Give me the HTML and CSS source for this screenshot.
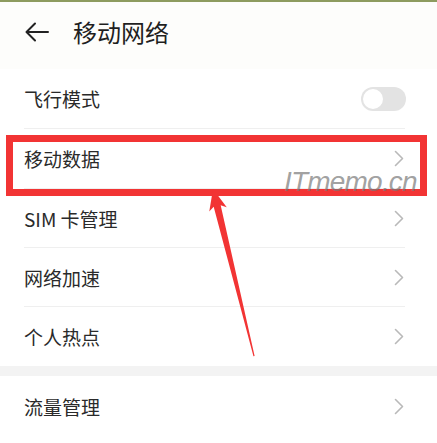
FILE: index.html
```html
<!DOCTYPE html>
<html>
<head>
    <meta charset="UTF-8">
    <title>移动网络</title>
    <link rel="stylesheet" href="styles.css">
</head>
<body>
    <div class="screen">
        <!-- Title bar -->
        <div class="topbar">
            <svg class="back" width="24" height="20" viewBox="0 0 24 20">
                <path d="M23 10 H2 M10 1.5 L1.5 10 L10 18.5" fill="none" stroke="#222" stroke-width="2" stroke-linecap="round" stroke-linejoin="round"/>
            </svg>
            <span class="title">移动网络</span>
        </div>

        <div class="group">
            <div class="row">
                <span class="label">飞行模式</span>
                <span class="switch"><span class="knob"></span></span>
            </div>
            <div class="row">
                <span class="label">移动数据</span>
                <svg class="chev" width="10" height="17" viewBox="0 0 10 17"><path d="M1.5 1.5 L8.5 8.5 L1.5 15.5" /></svg>
            </div>
            <div class="row short">
                <span class="label">SIM 卡管理</span>
                <svg class="chev" width="10" height="17" viewBox="0 0 10 17"><path d="M1.5 1.5 L8.5 8.5 L1.5 15.5" /></svg>
            </div>
            <div class="row short">
                <span class="label">网络加速</span>
                <svg class="chev" width="10" height="17" viewBox="0 0 10 17"><path d="M1.5 1.5 L8.5 8.5 L1.5 15.5" /></svg>
            </div>
            <div class="row short last">
                <span class="label">个人热点</span>
                <svg class="chev" width="10" height="17" viewBox="0 0 10 17"><path d="M1.5 1.5 L8.5 8.5 L1.5 15.5" /></svg>
            </div>
        </div>

        <div class="spacer"></div>

        <div class="group">
            <div class="row last">
                <span class="label">流量管理</span>
                <svg class="chev" width="10" height="17" viewBox="0 0 10 17"><path d="M1.5 1.5 L8.5 8.5 L1.5 15.5" /></svg>
            </div>
        </div>

        <!-- Annotation layer -->
        <div class="mark-box"></div>
        <div class="watermark">ITmemo.cn</div>
        <svg class="pointer" width="437" height="443" viewBox="0 0 437 443">
            <g transform="translate(213 189) rotate(-13.8)">
                <polygon points="0,0 -9,21 -3.6,17.5 -0.6,172 0.6,172 3.6,17.5 9,21" fill="#f23434"/>
            </g>
        </svg>
    </div>
</body>
</html>
```

FILE: styles.css
```css
/* Settings screen */
* {
    box-sizing: border-box;
}

body {
    margin: 0;
    background: #ffffff;
    font-family: "Noto Sans CJK SC", "Noto Sans", sans-serif;
    color: #2a2a2a;
}

.screen {
    position: relative;
    width: 437px;
    height: 443px;
    overflow: hidden;
    background: #ffffff;
    border-top: 2px solid #8d9b5f;
}

.topbar {
    height: 67px;
    display: flex;
    align-items: center;
    padding: 0 0 8px 25px;
    background: #fdfdfb;
}

.back {
    display: block;
    margin-right: 24px;
}

.title {
    font-size: 24px;
    color: #1f1f1f;
    line-height: 1;
}

.row {
    height: 60px;
    margin: 0 32px 0 24px;
    display: flex;
    align-items: center;
    justify-content: space-between;
    border-bottom: 1px solid #efefef;
}

.row.short {
    height: 59px;
}

.row.last {
    border-bottom: none;
}

.label {
    font-size: 19px;
    line-height: 1;
}

.chev {
    display: block;
    margin-right: 1px;
}

.chev path {
    fill: none;
    stroke: #b9b9b9;
    stroke-width: 1.6;
    stroke-linecap: round;
    stroke-linejoin: round;
}

/* toggle, off state */
.switch {
    position: relative;
    width: 45px;
    height: 24px;
    border-radius: 12px;
    background: #e3e3e3;
    margin-right: -1px;
}

.knob {
    position: absolute;
    left: 2px;
    top: 2px;
    width: 20px;
    height: 20px;
    border-radius: 50%;
    background: #ffffff;
}

.spacer {
    height: 10px;
    background: #f3f3f3;
}

/* red highlight around the mobile data row */
.mark-box {
    position: absolute;
    left: 6px;
    top: 133px;
    width: 421px;
    height: 61px;
    border: 7px solid #f23434;
}

.watermark {
    position: absolute;
    left: 284px;
    top: 164px;
    font-family: "Liberation Sans", sans-serif;
    font-style: italic;
    font-size: 28px;
    letter-spacing: -0.8px;
    line-height: 32px;
    color: rgba(120, 120, 120, 0.7);
}

.pointer {
    position: absolute;
    left: 0;
    top: -2px;
}
```
